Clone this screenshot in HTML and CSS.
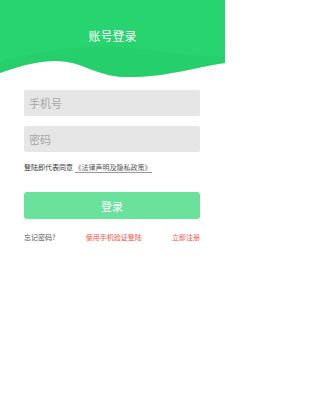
FILE: index.html
```html
<!DOCTYPE html>
<html lang="zh">
<head>
<meta charset="utf-8">
<link rel="stylesheet" href="styles.css">
</head>
<body>
<div class="page">
<header class="header">
  <svg class="wave" width="225" height="80" viewBox="0 0 225 80" preserveAspectRatio="none">
    <path d="M0 0 H225 V63 C205 65 165 78 125 77 C95 76 82 61 57 61 C32 61 12 69 0 73 Z" fill="#27d46f"/>
    <path d="M0 62 C40 50 90 44 130 48 C170 52 200 58 225 56 V63 C205 65 165 78 125 77 C95 76 82 61 57 61 C32 61 12 69 0 73 Z" fill="#24cc6a" opacity="0.5"/>
  </svg>
  <h1 class="title">账号登录</h1>
</header>
<main class="form">
  <div class="fields">
    <div class="field">手机号</div>
    <div class="field">密码</div>
  </div>
  <p class="agree">登陆即代表同意 <span class="link">《法律声明及隐私政策》</span></p>
  <button class="btn">登录</button>
  <div class="links">
    <span class="forgot">忘记密码?</span>
    <span class="red">使用手机验证登陆</span>
    <span class="red">立即注册</span>
  </div>
</main>
</div>
</body>
</html>
```
FILE: styles.css
```css
html, body {
  margin: 0;
  padding: 0;
  background: #fff;
  font-family: "Noto Sans CJK SC", "Noto Sans", sans-serif;
}
.page {
  width: 225px;
  height: 400px;
  overflow: hidden;
}
.header {
  position: relative;
  height: 80px;
  display: flex;
  justify-content: center;
}
.wave {
  position: absolute;
  left: 0;
  top: 0;
  display: block;
}
.title {
  position: relative;
  margin: 27px 0 0;
  height: 18px;
  line-height: 18px;
  font-size: 12px;
  font-weight: normal;
  color: #fff;
}
.form {
  padding: 10px 25px 0 24px;
  display: flex;
  flex-direction: column;
}
.fields {
  display: flex;
  flex-direction: column;
  gap: 10px;
}
.field {
  height: 26px;
  line-height: 26px;
  background: #e6e6e6;
  border-radius: 2px;
  padding-left: 5px;
  font-size: 11px;
  color: #a6a6a6;
}
.agree {
  margin: 8px 0 0;
  height: 14px;
  line-height: 14px;
  font-size: 7px;
  color: #333;
  white-space: nowrap;
}
.link {
  display: inline-block;
  line-height: 9px;
  border-bottom: 1px solid #999;
  color: #555;
}
.btn {
  margin-top: 18px;
  height: 27px;
  border: none;
  border-radius: 3px;
  background: #6be29b;
  color: #fff;
  font-family: inherit;
  font-size: 11px;
  padding: 0;
}
.links {
  margin-top: 12px;
  display: flex;
  justify-content: space-between;
  font-size: 7px;
  line-height: 12px;
}
.forgot { color: #555; }
.red { color: #f5533d; }
```
